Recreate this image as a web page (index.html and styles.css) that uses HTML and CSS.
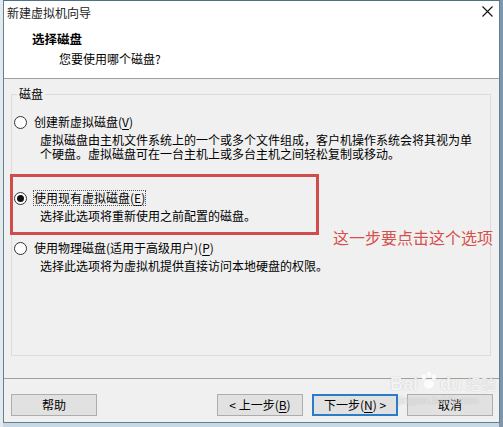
FILE: index.html
```html
<!DOCTYPE html>
<html lang="zh-CN">
<head>
  <meta charset="UTF-8" />
  <title>新建虚拟机向导</title>
  <link rel="stylesheet" href="styles.css">
</head>
<body>
  <div class="window">
    <div class="titlebar">
      <span class="title">新建虚拟机向导</span>
      <svg class="close" width="11" height="11" viewBox="0 0 11 11">
        <path d="M0.5 0.5 L10.5 10.5 M10.5 0.5 L0.5 10.5" stroke="#111" stroke-width="1.1" fill="none"/>
      </svg>
    </div>
    <div class="header">
      <div class="header-title">选择磁盘</div>
      <div class="header-sub">您要使用哪个磁盘?</div>
    </div>

    <div class="content">
      <fieldset class="group">
        <legend>磁盘</legend>

        <div class="option opt-create">
          <div class="option-label"><span class="radio"></span>创建新虚拟磁盘(<u>V</u>)</div>
          <div class="option-desc">虚拟磁盘由主机文件系统上的一个或多个文件组成，客户机操作系统会将其视为单<br>个硬盘。虚拟磁盘可在一台主机上或多台主机之间轻松复制或移动。</div>
        </div>

        <div class="option opt-existing">
          <div class="option-label"><span class="radio checked"></span><span class="focus">使用现有虚拟磁盘(<u>E</u>)</span></div>
          <div class="option-desc">选择此选项将重新使用之前配置的磁盘。</div>
        </div>

        <div class="option opt-physical">
          <div class="option-label"><span class="radio"></span>使用物理磁盘(适用于高级用户)(<u>P</u>)</div>
          <div class="option-desc">选择此选项将为虚拟机提供直接访问本地硬盘的权限。</div>
        </div>
      </fieldset>

      <!-- annotation drawn over the dialog -->
      <div class="mark-box"></div>
      <div class="mark-note">这一步要点击这个选项</div>
    </div>

    <div class="footer">
      <button class="btn">帮助</button>
      <div class="spacer"></div>
      <button class="btn">&lt; 上一步(<u>B</u>)</button>
      <button class="btn btn-default">下一步(<u>N</u>) &gt;</button>
      <button class="btn">取消</button>
    </div>

    <div class="watermark">
      <div class="wm-top">
        <span class="wm-bai">Bai</span>
        <svg class="wm-paw" width="20" height="20" viewBox="0 0 20 20">
          <ellipse cx="5" cy="6" rx="2.2" ry="2.8" fill="#fff"/>
          <ellipse cx="10" cy="3.5" rx="2.2" ry="2.8" fill="#fff"/>
          <ellipse cx="15" cy="6" rx="2.2" ry="2.8" fill="#fff"/>
          <ellipse cx="10" cy="13" rx="5" ry="4.5" fill="#fff"/>
        </svg>
        <span class="wm-du">du</span>
        <span class="wm-jy">经验</span>
      </div>
      <div class="wm-url">jingyan.baidu.com</div>
    </div>
  </div>
</body>
</html>
```

FILE: styles.css
```css
* { box-sizing: border-box; }
body {
  margin: 0;
  width: 503px;
  height: 427px;
  overflow: hidden;
  background: linear-gradient(to right, #e4e9ec 0, #e4e9ec 3px, #c9d8e4 3px, #c9d8e4 499px, #7f97ad 499px);
  font-family: "Noto Sans CJK SC", "Noto Sans", sans-serif;
  font-size: 12px;
  color: #000;
}
.window {
  position: relative;
  margin-left: 3px;
  width: 497px;
  height: 423px;
  border: 1px solid #5f8194;
  border-top-color: #4d7285;
  background: #f0f0f0;
  display: flex;
  flex-direction: column;
}
.titlebar {
  height: 23px;
  background: #fff;
  display: flex;
  align-items: center;
  justify-content: space-between;
  padding: 0 6px 0 3px;
}
.title {
  font-size: 12px;
  line-height: 14px;
  color: #222;
}
.close { margin-top: -3px; }
.header {
  height: 55px;
  background: #fff;
  border-bottom: 1px solid #a0a0a0;
  padding: 8px 0 0 28px;
}
.header-title {
  font-weight: bold;
  font-size: 12.5px;
  line-height: 14px;
}
.header-sub {
  line-height: 14px;
  margin-top: 6px;
  padding-left: 27px;
}
.content {
  flex: 1;
  position: relative;
}
.group {
  margin: 8px 8px 0 7px;
  height: 269px;
  padding: 0 0 0 2px;
  border: 1px solid #dcdcdc;
}
.group legend {
  padding: 0 2px;
  margin-left: 3px;
  line-height: 14px;
}
.option-label {
  display: flex;
  align-items: center;
  line-height: 14px;
  height: 14px;
}
.option-desc {
  margin-top: 4px;
  margin-left: 26px;
  line-height: 14px;
}
.opt-create { margin-top: 14px; }
.opt-existing { margin-top: 30px; }
.opt-physical { margin-top: 18px; }
.radio {
  width: 13px;
  height: 13px;
  border: 1px solid #333;
  border-radius: 50%;
  background: #fff;
  margin-right: 7px;
  display: flex;
  align-items: center;
  justify-content: center;
}
.radio.checked::after {
  content: "";
  width: 7px;
  height: 7px;
  border-radius: 50%;
  background: #111;
}
.focus { outline: 1px dotted #555; outline-offset: 0; }
u { text-decoration-thickness: 1px; text-underline-offset: 2px; }
.mark-box {
  position: absolute;
  left: 6px;
  top: 95px;
  width: 309px;
  height: 61px;
  border: 3px solid #d04d4c;
}
.mark-note {
  position: absolute;
  left: 329px;
  top: 148px;
  font-size: 16px;
  line-height: 20px;
  color: #d5504d;
}
.footer {
  height: 38px;
  border-top: 1px solid #a0a0a0;
  margin-bottom: 6px;
  display: flex;
  align-items: flex-end;
  gap: 9px;
  padding: 0 6px 0 7px;
}
.spacer { flex: 1; }
.btn {
  width: 86px;
  height: 22px;
  padding: 0;
  font-family: inherit;
  font-size: 12px;
  line-height: 14px;
  background: #e1e1e1;
  border: 1px solid #adadad;
  color: #000;
}
.btn-default {
  border: 2px solid #2b7bc9;
}
.watermark {
  position: absolute;
  left: 386px;
  top: 370px;
  color: rgba(255, 255, 255, 0.85);
  text-shadow: 0 0 1px rgba(120, 120, 120, 0.5);
}
.wm-top {
  display: flex;
  align-items: flex-end;
  gap: 1px;
  line-height: 20px;
}
.wm-bai, .wm-du {
  font-family: "Liberation Sans", sans-serif;
  font-weight: bold;
  font-size: 18px;
}
.wm-paw { margin-bottom: 3px; opacity: 0.85; }
.wm-jy { font-size: 15px; margin-left: 3px; }
.wm-url {
  font-family: "Liberation Sans", sans-serif;
  font-size: 10px;
  margin-top: 1px;
  padding-left: 8px;
  color: rgba(255, 255, 255, 0.6);
}
```
